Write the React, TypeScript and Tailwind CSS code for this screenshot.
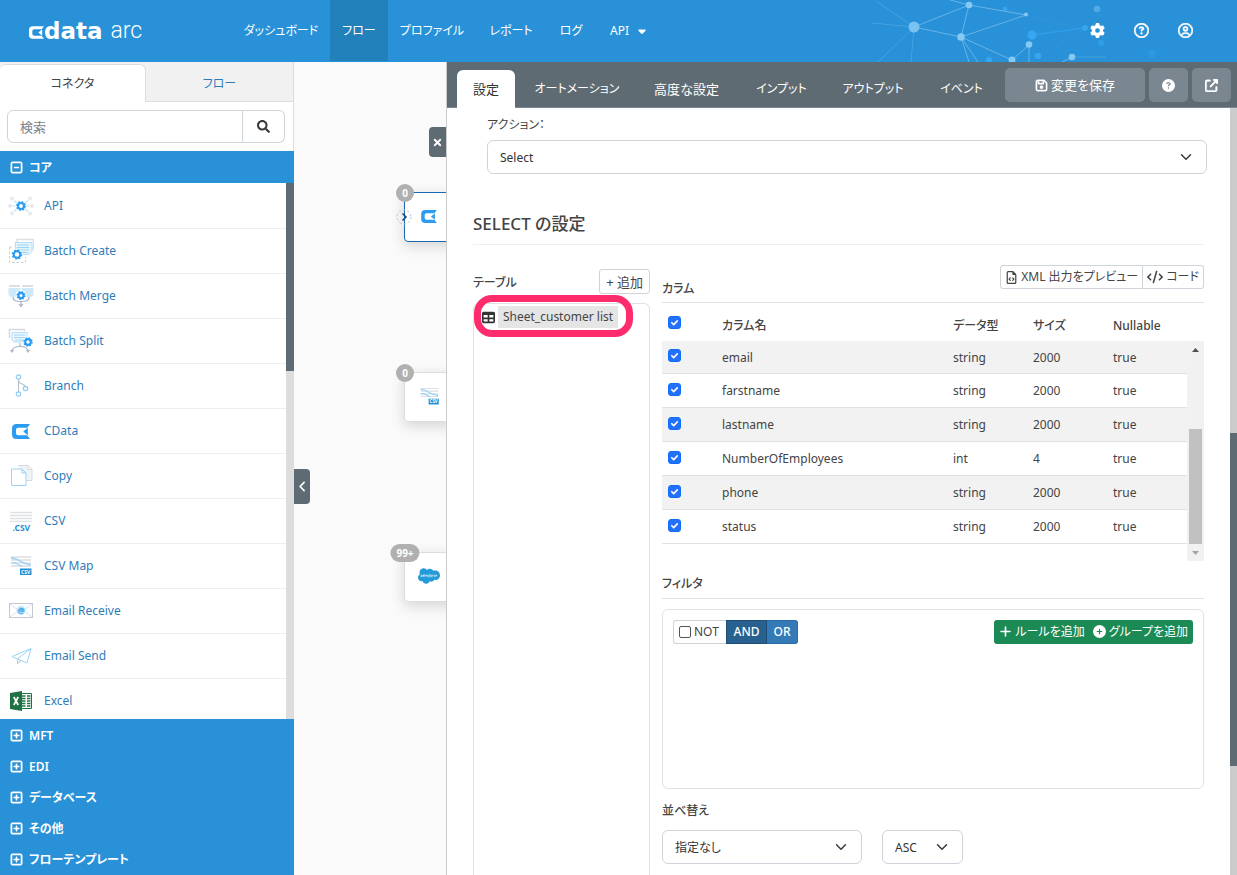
import React from "react";
import { FaSearch, FaTimes } from "react-icons/fa";
import {
  FaAngleLeft,
  FaCaretDown,
  FaCirclePlus,
  FaCircleQuestion,
  FaCode,
  FaGear,
  FaPlus,
  FaRegCircleQuestion,
  FaRegCircleUser,
  FaRegFileCode,
  FaRegFloppyDisk,
  FaRegSquareMinus,
  FaRegSquarePlus,
  FaSalesforce,
  FaTable,
  FaUpRightFromSquare,
} from "react-icons/fa6";

const BLUE = "#2b9cf2";
const PALE = "#9ad3f5";
const GREY = "#c9ced6";

function Gear({ x, y, r = 3 }: { x: number; y: number; r?: number }) {
  const outer = r + 1.2;
  const step = (2 * Math.PI * outer) / 16;
  return (
    <g fill="none" stroke={BLUE}>
      <circle cx={x} cy={y} r={r} strokeWidth="2.2" />
      <circle cx={x} cy={y} r={outer} strokeWidth="1.5" strokeDasharray={`${step} ${step}`} />
    </g>
  );
}

function Icon({ children }: { children: React.ReactNode }) {
  return (
    <svg viewBox="0 0 26 26" className="size-[26px] shrink-0" aria-hidden="true">
      {children}
    </svg>
  );
}

function ApiIcon() {
  return (
    <Icon>
      <g fill="none" stroke="#d8dce2" strokeWidth="1">
        <circle cx="4" cy="5.5" r="1.4" />
        <circle cx="22" cy="5.5" r="1.4" />
        <circle cx="2" cy="13" r="1.3" />
        <circle cx="24" cy="13" r="1.3" />
        <circle cx="4" cy="20.5" r="1.4" />
        <circle cx="22" cy="20.5" r="1.4" />
      </g>
      <path d="M6 7.500l3 2.500M20 7.500l-3 2.500M4.500 13h3M21.500 13h-3M6 18.500l3-2.500M20 18.500l-3-2.500" stroke="#c3e3f7" strokeWidth="1.200" />
      <Gear x={13} y={13} />
    </Icon>
  );
}

function BatchCreateIcon() {
  return (
    <Icon>
      <path d="M9 4V1.500h16.500V12" fill="none" stroke="#dcdfe4" strokeWidth="1.500" />
      <path d="M1.500 9v15.500h16V19M1.500 9h5" fill="none" stroke={GREY} strokeDasharray="2.500 2" />
      <path d="M7 4.500h17v9l-3 3H9z" fill="#e6f4fc" stroke="#b4def7" />
      <path d="M9 7h12M9 9.500h12M10 12h11M13 14.500h7" stroke={PALE} strokeWidth="1.200" />
      <circle cx="9" cy="16.500" r="5.500" fill="#fff" />
      <Gear x={9} y={16.500} r={3.300} />
    </Icon>
  );
}

function BatchMergeIcon() {
  return (
    <Icon>
      <path d="M1 3h11M14 3h11" stroke="#dcdfe4" strokeWidth="2" />
      <path d="M.5 5h12v7l-2 2H3l-2.500-2zM13.500 5h12v7l-2.500 2h-7.500l-2-2z" fill="#cde9fa" />
      <path d="M5 14c0 4 3 4.500 8 4.500s8-.5 8-4.500M13 18v5M11 21l2 2.500 2-2.500" fill="none" stroke="#a9b4c6" strokeWidth="1.200" />
      <circle cx="13" cy="12.500" r="5.500" fill="#fff" />
      <Gear x={13} y={12.500} r={2.600} />
    </Icon>
  );
}

function BatchSplitIcon() {
  return (
    <Icon>
      <path d="M1.500 10V1.500h15V3" fill="none" stroke="#d5d9df" strokeWidth="1.500" />
      <path d="M4 4.500h15V14H6l-2-2.500z" fill="#eef8fe" stroke="#b4def7" />
      <path d="M6 7h11M6 9.500h11M7 12h9" stroke={PALE} strokeWidth="1.200" />
      <path d="M12 15v3M4 23.500c0-4 3-5 8-5s8 1 8 5M2.500 22l1.500 2 1.500-2M18.500 22l1.500 2 1.500-2" fill="none" stroke="#a9b4c6" strokeWidth="1.200" />
      <circle cx="20" cy="14" r="5" fill="#fff" />
      <Gear x={20} y={14} r={2.800} />
    </Icon>
  );
}

function BranchIcon() {
  return (
    <Icon>
      <path d="M10.500 6v13M10.500 7.500c.5 4 6 3 6.700 6" fill="none" stroke="#b6bfce" strokeWidth="1.100" />
      <g fill="#fff" stroke="#8ecbf3" strokeWidth="1.200">
        <circle cx="10.500" cy="4" r="2.200" />
        <circle cx="10.500" cy="21" r="2.200" />
        <circle cx="17.500" cy="15.500" r="2.200" />
      </g>
    </Icon>
  );
}

function CDataMark({ className, fill }: { className: string; fill: string }) {
  return (
    <svg viewBox="0 0 18 15" className={className} aria-hidden="true">
      <path d="M4.500 0H18l-2.800 3.700H6.200Q4 3.700 4 5.700v3.600q0 2 2.200 2h9L18 15H4.500Q0 15 0 10.500v-6Q0 0 4.500 0z" fill={fill} />
      <path d="M15.800 3.700v7.600L11.200 7.500z" fill={fill} />
    </svg>
  );
}

function CopyIcon() {
  return (
    <Icon>
      <path d="M10 2.500h10l4 4v11h-6M20 2.500v4h4" fill="#f1f3f5" stroke="#d5d9df" />
      <path d="M3.500 6h10.500l4 4v12.500H3.500zM14 6v4h4" fill="#fff" stroke={PALE} />
    </Icon>
  );
}

function CsvIcon() {
  return (
    <Icon>
      <path d="M2 4.500h22M2 7.500h22M2 10.500h22M2 13.500h22" stroke="#dfe2e5" strokeWidth="1.300" />
      <rect x="4" y="14" width="22" height="11" fill="#fff" />
      <text x="4.500" y="22.500" fontSize="8.500" fontWeight="700" fill="#1e90d6" fontFamily="'Noto Sans', sans-serif">.CSV</text>
    </Icon>
  );
}

function CsvMapIcon() {
  return (
    <Icon>
      <path d="M3 4h20M3 7h20M3 10h20M3 13h20" stroke="#dcdfe3" strokeWidth="1.300" />
      <path d="M3 10c7-2 7 4 11 3M3 5c8 0 10 6 20 7" fill="none" stroke={PALE} strokeWidth="1.300" />
      <rect x="12" y="15.500" width="11.500" height="6.500" fill="#1e90d6" />
      <text x="17.700" y="20.800" fontSize="5" fontWeight="700" fill="#fff" textAnchor="middle" fontFamily="'Noto Sans', sans-serif">CSV</text>
    </Icon>
  );
}

function EmailReceiveIcon() {
  return (
    <Icon>
      <rect x="1.500" y="5.500" width="23" height="14" fill="#fff" stroke="#c3c9d3" />
      <path d="M2 6l8 6M24 6l-8 6M2 19l8-6M24 19l-8-6" stroke="#cdd9ea" strokeWidth=".8" />
      <circle cx="13" cy="12.500" r="4.400" fill="#b5dff8" />
      <text x="13" y="15" fontSize="7.500" fontWeight="700" fill="#2b9be0" textAnchor="middle" fontFamily="'Noto Sans', sans-serif">@</text>
    </Icon>
  );
}

function EmailSendIcon() {
  return (
    <Icon>
      <path d="M23 5.500L4 13.500l5.500 2.500 9.500 4zM23 5.500L9.500 16v4.500l3.500-3" fill="#fff" stroke={PALE} strokeLinejoin="round" />
      <path d="M9.500 20.500l3.500-3" stroke={GREY} />
    </Icon>
  );
}

function ExcelIcon() {
  return (
    <Icon>
      <path d="M13 5.500h10.500v15H13z" fill="#fff" stroke="#1f7244" />
      <path d="M14 8h3.500M19 8h3.500M14 10.500h3.500M19 10.500h3.500M14 13h3.500M19 13h3.500M14 15.500h3.500M19 15.500h3.500M14 18h3.500M19 18h3.500" stroke="#1f7244" strokeWidth="1.500" />
      <path d="M2 5l12-2v20L2 21z" fill="#1f7244" />
      <path d="M5.800 9l4.400 8M10.200 9l-4.400 8" stroke="#fff" strokeWidth="1.700" />
    </Icon>
  );
}

const connectors = [
  { name: "API", icon: <ApiIcon /> },
  { name: "Batch Create", icon: <BatchCreateIcon /> },
  { name: "Batch Merge", icon: <BatchMergeIcon /> },
  { name: "Batch Split", icon: <BatchSplitIcon /> },
  { name: "Branch", icon: <BranchIcon /> },
  {
    name: "CData",
    icon: (
      <span className="flex w-[26px] justify-center">
        <CDataMark className="h-[15px] w-[18px]" fill={BLUE} />
      </span>
    ),
  },
  { name: "Copy", icon: <CopyIcon /> },
  { name: "CSV", icon: <CsvIcon /> },
  { name: "CSV Map", icon: <CsvMapIcon /> },
  { name: "Email Receive", icon: <EmailReceiveIcon /> },
  { name: "Email Send", icon: <EmailSendIcon /> },
  { name: "Excel", icon: <ExcelIcon /> },
];

const groups = ["MFT", "EDI", "データベース", "その他", "フローテンプレート"];

const columns = [
  { name: "email", type: "string", size: "2000" },
  { name: "farstname", type: "string", size: "2000" },
  { name: "lastname", type: "string", size: "2000" },
  { name: "NumberOfEmployees", type: "int", size: "4" },
  { name: "phone", type: "string", size: "2000" },
  { name: "status", type: "string", size: "2000" },
];

const tabs = [
  { label: "オートメーション", style: "w-[106px] text-xs" },
  { label: "高度な設定", style: "w-[95px] text-[13px]" },
  { label: "インプット", style: "w-[77px] text-xs" },
  { label: "アウトプット", style: "w-[88px] text-xs" },
  { label: "イベント", style: "w-[71px] text-xs" },
];

function NetworkArt() {
  return (
    <svg viewBox="0 0 437 62" className="absolute top-0 right-0 h-[62px] w-[437px]" aria-hidden="true">
      <g stroke="#7cc0ee" strokeWidth="1" opacity=".75">
        <path d="M114 27L161 37M114 27L169 5L161 37L226 15L169 5L150 0M161 37L212 60L229 45V62M161 37l8 25M161 37l17 25M272 57l-10 5" fill="none" />
      </g>
      <g stroke="#5cb2ea" strokeWidth="1" opacity=".55" fill="none">
        <path d="M114 27L76 1M114 27L72 23M114 27L78 62M114 27L111 62M272 57h34" />
        <path d="M232 35l53-7" stroke="#35a8f5" strokeWidth="1.500" />
        <path d="M285 28l-45 28M205 9l68 18M216 20l16 15" strokeDasharray="2 2" opacity=".5" />
      </g>
      <g fill="#36a6f0">
        <circle cx="205" cy="9" r="2.300" />
        <circle cx="232" cy="35" r="4.500" />
        <circle cx="238" cy="56" r="3.300" />
        <circle cx="189" cy="60" r="3" />
        <circle cx="285" cy="28" r="3" />
        <circle cx="301" cy="43" r="3" opacity=".6" />
        <circle cx="352" cy="54" r="4" opacity=".4" />
      </g>
      <g fill="#86c9f4">
        <circle cx="114" cy="27" r="5.500" opacity=".85" />
        <circle cx="161" cy="37" r="3.800" />
        <circle cx="169" cy="5" r="3.300" />
        <circle cx="226" cy="14.500" r="2" />
        <circle cx="229" cy="44.500" r="3.300" />
        <circle cx="212" cy="60" r="3.500" />
        <circle cx="272" cy="57" r="3.300" />
        <circle cx="297" cy="9" r="3.300" opacity=".45" />
      </g>
    </svg>
  );
}

function TopBar() {
  const item = "flex h-[61px] items-center justify-center whitespace-nowrap";
  return (
    <header className="relative flex h-[62px] shrink-0 bg-[#2891d8] text-white">
      <NetworkArt />
      <a href="#home" className="flex w-[232px] shrink-0 items-center pl-[29px]" aria-label="cdata arc">
        <CDataMark className="mt-0.5 h-[13px] w-[15px]" fill="#fff" />
        <span className="font-['DejaVu_Sans'] text-[23px] leading-7 font-bold">data</span>
        <span className="ml-2 font-['Roboto'] text-[23px] leading-7 font-light">arc</span>
      </a>
      <nav className="flex">
        <a href="#dashboard" className={`${item} w-[98px]`}>ダッシュボード</a>
        <a href="#flow" className={`${item} w-[58px] bg-[#2280ba]`} aria-current="page">フロー</a>
        <a href="#profile" className={`${item} w-[88px]`}>プロファイル</a>
        <a href="#report" className={`${item} w-[70px]`}>レポート</a>
        <a href="#log" className={`${item} w-[50px]`}>ログ</a>
        <button type="button" className={`${item} w-[66px] gap-[7px]`}>
          API
          <FaCaretDown />
        </button>
      </nav>
      <div className="relative ml-auto flex items-center gap-[29px] pr-11 pb-0.5 text-[15px]">
        <button type="button" aria-label="設定"><FaGear /></button>
        <button type="button" aria-label="ヘルプ"><FaRegCircleQuestion className="stroke-current [stroke-width:16px]" /></button>
        <button type="button" aria-label="アカウント"><FaRegCircleUser className="stroke-current [stroke-width:16px]" /></button>
      </div>
    </header>
  );
}

function Sidebar() {
  return (
    <aside className="flex w-[294px] shrink-0 flex-col bg-white">
      <div className="flex h-10 shrink-0 border-r border-[#ddd] bg-[#f1f1f1]" role="tablist">
        <button type="button" role="tab" aria-selected="true" className="mt-0.5 w-[146px] rounded-t-md border-t border-r border-[#ddd] bg-white text-[#444]">コネクタ</button>
        <button type="button" role="tab" aria-selected="false" className="flex-1 border-b border-[#ddd] pt-1 text-[#2f7cba]">フロー</button>
      </div>
      <div className="flex h-[49px] shrink-0 border-r border-[#ddd] pt-2 pr-2 pb-2 pl-[7px]">
        <input type="search" aria-label="検索" placeholder="検索" className="min-w-0 flex-1 rounded-l-md border border-[#ced4da] px-3 text-[13px] placeholder:text-[#7b8288]" />
        <button type="button" aria-label="検索する" className="flex w-[42px] items-center justify-center rounded-r-md border border-l-0 border-[#ced4da] text-[13px] text-[#3a3a3a]"><FaSearch /></button>
      </div>
      <button type="button" className="flex h-8 shrink-0 items-center gap-1.5 bg-[#2891d8] pt-px pl-2.5 font-semibold text-white">
        <FaRegSquareMinus className="stroke-current text-[13px] [stroke-width:20px]" />コア
      </button>
      <div className="flex min-h-0 flex-1 overflow-hidden">
        <ul className="flex-1 pt-px">
          {connectors.map((c) => (
            <li key={c.name} className="h-[45px] border-b border-[#eee]">
              <a href="#connector" className="flex h-full items-center gap-[10px] pl-2 text-[#2f7cba]">
                {c.icon}
                {c.name}
              </a>
            </li>
          ))}
        </ul>
        <div className="w-2 bg-[#ddd]">
          <div className="h-[35%] bg-[#5f6b73]" />
        </div>
      </div>
      <div className="shrink-0 bg-[#2891d8] pt-px text-white">
        {groups.map((g) => (
          <button key={g} type="button" className="flex h-[31px] w-full items-center gap-1.5 pl-2.5 font-semibold">
            <FaRegSquarePlus className="stroke-current text-[13px] [stroke-width:20px]" />{g}
          </button>
        ))}
      </div>
    </aside>
  );
}

function FlowNode({ place, badge, active, children }: { place: string; badge: string; active?: boolean; children: React.ReactNode }) {
  return (
    <div className={`absolute left-[110px] h-[50px] w-[150px] ${place}`}>
      <div className={`flex size-full items-center rounded-sm border bg-white pb-0.5 pl-[11px] shadow-[0_4px_14px_rgba(0,0,0,0.15)] ${active ? "border-[#1a66b0]" : "border-[#ddd]"}`}>
        {children}
      </div>
      <span className="absolute top-px left-px flex h-[18px] min-w-[18px] -translate-x-1/2 -translate-y-1/2 items-center justify-center rounded-full bg-[#b0b0b0] px-1.5 text-[10px] font-bold text-white">{badge}</span>
    </div>
  );
}

function Canvas() {
  return (
    <section className="relative w-[152px] shrink-0 overflow-hidden bg-[#fafafa]">
      <FlowNode place="top-[130px]" badge="0" active>
        <span className="flex w-[26px] justify-center"><CDataMark className="h-[13px] w-4" fill={BLUE} /></span>
        <svg viewBox="0 0 16 16" className="absolute top-[17px] -left-2 size-4" aria-hidden="true">
          <circle cx="8" cy="8" r="7" fill="none" stroke="#c4c4c4" strokeDasharray="2.500 2" />
          <path d="M6.500 4.500L10 8l-3.500 3.500" fill="none" stroke="#1a4f80" strokeWidth="1.600" />
        </svg>
      </FlowNode>
      <FlowNode place="top-[310px]" badge="0">
        <span className="flex w-[26px] justify-center [&>svg]:size-[23px]"><CsvMapIcon /></span>
      </FlowNode>
      <FlowNode place="top-[490px]" badge="99+">
        <FaSalesforce className="ml-0.5 text-[22px] text-[#249bd8]" />
      </FlowNode>
      <button type="button" aria-label="パネルを閉じる" className="absolute top-[65px] right-0 flex h-[30px] w-[17px] items-center justify-center rounded-l-sm bg-[#5f6b73] text-[11px] text-white"><FaTimes /></button>
      <button type="button" aria-label="サイドバーをたたむ" className="absolute top-[407px] left-0 flex h-[35px] w-4 items-center justify-center rounded-r-sm bg-[#5f6b73] text-[13px] text-white"><FaAngleLeft /></button>
    </section>
  );
}

function Check({ label }: { label: string }) {
  return (
    <span className="grid size-[13px] place-items-center">
      <input type="checkbox" defaultChecked aria-label={label} className="peer col-start-1 row-start-1 size-[13px] appearance-none rounded-[3px] border border-[#0d6efd] checked:bg-[#2470f8]" />
      <svg viewBox="0 0 13 13" className="pointer-events-none col-start-1 row-start-1 hidden size-[13px] peer-checked:block" aria-hidden="true">
        <path d="M3.800 6.700L5.700 8.600L9.300 4.900" fill="none" stroke="#fff" strokeWidth="1.600" strokeLinecap="round" strokeLinejoin="round" />
      </svg>
    </span>
  );
}

function Dropdown({ id, value, width }: { id: string; value: string; width: string }) {
  return (
    <div className={`relative h-[34px] ${width}`}>
      <select id={id} aria-label={id === "order" ? "並び順" : undefined} className="size-full appearance-none rounded-md border border-[#ced4da] bg-white px-3 pt-0.5 text-xs text-[#333]">
        <option>{value}</option>
      </select>
      <svg viewBox="0 0 16 16" className="pointer-events-none absolute top-[11px] right-[15px] size-3" aria-hidden="true">
        <path d="M2 5l6 6 6-6" fill="none" stroke="#343a40" strokeWidth="2" strokeLinecap="round" strokeLinejoin="round" />
      </svg>
    </div>
  );
}

function ColumnTable() {
  return (
    <div className="relative pb-[17px]">
      <table className="w-full table-fixed border-collapse text-left">
        <colgroup>
          <col className="w-[60px]" />
          <col />
          <col className="w-20" />
          <col className="w-20" />
          <col className="w-[91px]" />
        </colgroup>
        <thead>
          <tr className="h-[38px]">
            <th className="pl-1.5 align-middle"><Check label="すべて選択" /></th>
            <th className="pt-2 font-medium">カラム名</th>
            <th className="pt-2 font-medium">データ型</th>
            <th className="pt-2 font-medium">サイズ</th>
            <th className="pt-2 font-medium">Nullable</th>
          </tr>
        </thead>
        <tbody>
          {columns.map((c) => (
            <tr key={c.name} className="h-[34px] border-b border-[#dee2e6] first:h-8 odd:bg-[#f2f2f2]">
              <td className="pb-0.5 pl-1.5"><Check label={c.name} /></td>
              <td className="pt-0.5">{c.name}</td>
              <td className="pt-0.5">{c.type}</td>
              <td className="pt-0.5">{c.size}</td>
              <td className="pt-0.5">true</td>
            </tr>
          ))}
        </tbody>
      </table>
      <div className="absolute top-[38px] right-0 bottom-0 flex w-[17px] flex-col items-center bg-[#f1f1f1]" aria-hidden="true">
        <svg viewBox="0 0 17 17" className="size-[17px]"><path d="M5 11l3.500-4 3.500 4z" fill="#505050" /></svg>
        <div className="flex w-[13px] flex-1 flex-col justify-end"><div className="h-[62%] bg-[#c1c1c1]" /></div>
        <svg viewBox="0 0 17 17" className="size-[17px]"><path d="M5 7l3.500 4 3.500-4z" fill="#a3a3a3" /></svg>
      </div>
    </div>
  );
}

function FilterBox() {
  return (
    <div className="mt-2.5 flex h-[180px] items-start justify-between rounded-md border border-[#dee2e6] p-2.5">
      <div className="flex h-6">
        <label className="flex w-[53px] items-center gap-[3px] rounded-l-[3px] border border-r-0 border-[#ced4da] pl-[5px]">
          <input type="checkbox" className="size-3 appearance-none rounded-[2px] border border-[#555]" />
          NOT
        </label>
        <button type="button" className="w-[41px] border border-[#204d74] bg-[#286090] font-medium text-white">AND</button>
        <button type="button" className="w-[31px] rounded-r-[3px] border border-l-0 border-[#2e6da4] bg-[#337ab7] font-medium text-white">OR</button>
      </div>
      <div className="flex h-6 rounded-[3px] bg-[#1b8a54] text-white">
        <button type="button" className="flex items-center gap-[3px] pr-1 pl-[5px]"><FaPlus className="text-[13px]" />ルールを追加</button>
        <button type="button" className="flex items-center gap-[3px] pr-[5px] pl-1"><FaCirclePlus className="text-[13px]" />グループを追加</button>
      </div>
    </div>
  );
}

function Panel() {
  return (
    <main className="flex min-w-0 flex-1 flex-col border-l border-[#ccc] bg-white">
      <div className="flex h-[46px] shrink-0 border-b border-[#7a8791] bg-[#5f6b73] pl-2.5 whitespace-nowrap text-white">
        <div className="flex items-end gap-[9px]" role="tablist">
          <button type="button" role="tab" aria-selected="true" className="-mb-px h-[38px] w-[58px] rounded-t-md bg-white text-[13px] text-[#333]">設定</button>
          {tabs.map((t) => (
            <button key={t.label} type="button" role="tab" aria-selected="false" className={`h-[38px] pt-0.5 ${t.style}`}>{t.label}</button>
          ))}
        </div>
        <div className="ml-auto flex gap-1 pt-1.5 pr-1.5 pb-[5px] text-[13px]">
          <button type="button" className="flex w-[140px] items-center justify-center gap-[3px] rounded-[5px] bg-[#7a8791]"><FaRegFloppyDisk className="stroke-current [stroke-width:16px]" />変更を保存</button>
          <button type="button" aria-label="ヘルプ" className="flex w-[39px] items-center justify-center rounded-[5px] bg-[#7a8791]"><FaCircleQuestion /></button>
          <button type="button" aria-label="新しいウィンドウで開く" className="flex w-[39px] items-center justify-center rounded-[5px] bg-[#7a8791]"><FaUpRightFromSquare className="stroke-current [stroke-width:16px]" /></button>
        </div>
      </div>
      <div className="flex min-h-0 flex-1">
        <div className="flex min-w-0 flex-1 flex-col overflow-hidden pt-1 pr-[26px] pl-[26px] text-[#444]">
          <div className="-mr-[3px] ml-3.5">
            <label htmlFor="action" className="block h-7 leading-[26px]">アクション：</label>
            <Dropdown id="action" value="Select" width="w-full" />
          </div>
          <h2 className="mt-9 border-b border-[#eee] pb-1.5 text-[17px] leading-7 font-medium">SELECT の設定</h2>
          <div className="flex flex-1 gap-3">
            <div className="flex w-[177px] shrink-0 flex-col pt-6">
              <div className="flex h-[25px] items-center justify-between">
                <h3 className="pt-0.5 font-medium">テーブル</h3>
                <button type="button" className="h-[25px] rounded-[3px] border border-[#ced4da] px-1.5 text-[13px]">+ 追加</button>
              </div>
              <div className="relative mt-[9px] flex-1 rounded-t-md border border-b-0 border-[#dee2e6] pt-px pl-2">
                <a href="#sheet" className="flex h-6 items-center gap-[3px]">
                  <FaTable className="text-[13px] text-[#333]" />
                  <span className="bg-[#e5e5e5] px-[5px] leading-[22px]">Sheet_customer list</span>
                </a>
                <div className="pointer-events-none absolute -top-[9px] left-0 h-[42px] w-[159px] rounded-[18px] border-[7px] border-[#ff2c6d]" />
              </div>
            </div>
            <div className="min-w-0 flex-1 pt-5">
              <div className="flex h-[38px] justify-between border-b border-[#dee2e6]">
                <h3 className="self-end pb-[3px] font-medium">カラム</h3>
                <div className="flex h-6">
                  <button type="button" className="flex items-center gap-[3px] rounded-l-[3px] border border-[#ced4da] px-1"><FaRegFileCode className="text-[13px]" />XML 出力をプレビュー</button>
                  <button type="button" className="flex items-center gap-[3px] rounded-r-[3px] border border-l-0 border-[#ced4da] px-1"><FaCode className="text-base" />コード</button>
                </div>
              </div>
              <ColumnTable />
              <h3 className="mt-3 border-b border-[#dee2e6] pb-[3px] leading-[22px] font-medium">フィルタ</h3>
              <FilterBox />
              <label htmlFor="sort" className="mt-3 block h-[29px] leading-5 font-medium">並べ替え</label>
              <div className="flex gap-5 pb-6">
                <Dropdown id="sort" value="指定なし" width="w-[200px]" />
                <Dropdown id="order" value="ASC" width="w-[81px]" />
              </div>
            </div>
          </div>
        </div>
        <div className="flex w-[7px] shrink-0 flex-col bg-[#ccc] pt-[325px]" aria-hidden="true">
          <div className="h-[333px] bg-[#5f6b73]" />
        </div>
      </div>
    </main>
  );
}

export default function App() {
  return (
    <div className="flex h-screen flex-col overflow-hidden font-['Noto_Sans','Noto_Sans_CJK_JP',sans-serif] text-xs leading-5 [font-feature-settings:'palt']">
      <TopBar />
      <div className="flex min-h-0 flex-1">
        <Sidebar />
        <Canvas />
        <Panel />
      </div>
    </div>
  );
}
